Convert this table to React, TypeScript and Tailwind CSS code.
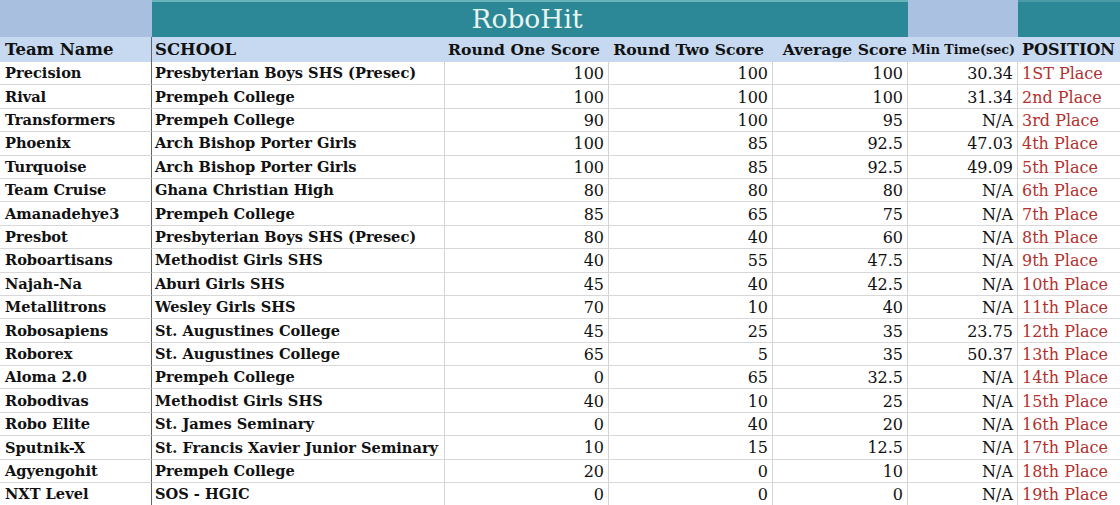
import React from "react";

type Row = [string, string, string, string, string, string, string];

const rows: Row[] = [
  ["Precision", "Presbyterian Boys SHS (Presec)", "100", "100", "100", "30.34", "1ST Place"],
  ["Rival", "Prempeh College", "100", "100", "100", "31.34", "2nd Place"],
  ["Transformers", "Prempeh College", "90", "100", "95", "N/A", "3rd Place"],
  ["Phoenix", "Arch Bishop Porter Girls", "100", "85", "92.5", "47.03", "4th Place"],
  ["Turquoise", "Arch Bishop Porter Girls", "100", "85", "92.5", "49.09", "5th Place"],
  ["Team Cruise", "Ghana Christian High", "80", "80", "80", "N/A", "6th Place"],
  ["Amanadehye3", "Prempeh College", "85", "65", "75", "N/A", "7th Place"],
  ["Presbot", "Presbyterian Boys SHS (Presec)", "80", "40", "60", "N/A", "8th Place"],
  ["Roboartisans", "Methodist Girls SHS", "40", "55", "47.5", "N/A", "9th Place"],
  ["Najah-Na", "Aburi Girls SHS", "45", "40", "42.5", "N/A", "10th Place"],
  ["Metallitrons", "Wesley Girls SHS", "70", "10", "40", "N/A", "11th Place"],
  ["Robosapiens", "St. Augustines College", "45", "25", "35", "23.75", "12th Place"],
  ["Roborex", "St. Augustines College", "65", "5", "35", "50.37", "13th Place"],
  ["Aloma 2.0", "Prempeh College", "0", "65", "32.5", "N/A", "14th Place"],
  ["Robodivas", "Methodist Girls SHS", "40", "10", "25", "N/A", "15th Place"],
  ["Robo Elite", "St. James Seminary", "0", "40", "20", "N/A", "16th Place"],
  ["Sputnik-X", "St. Francis Xavier Junior Seminary", "10", "15", "12.5", "N/A", "17th Place"],
  ["Agyengohit", "Prempeh College", "20", "0", "10", "N/A", "18th Place"],
  ["NXT Level", "SOS - HGIC", "0", "0", "0", "N/A", "19th Place"],
];

const font = { fontFamily: '"DejaVu Serif", "Liberation Serif", serif' };

const headers: [string, string][] = [
  ["Team Name", "justify-start pl-[5px] border-r border-[#666] text-[16.5px]"],
  ["SCHOOL", "justify-start pl-[3px] text-[16.5px]"],
  ["Round One Score", "justify-end pr-[9px] text-[15.6px]"],
  ["Round Two Score", "justify-end pr-[9px] text-[15.6px]"],
  ["Average Score", "justify-end pr-[1px] text-[15.6px]"],
  ["Min Time(sec)", "justify-end pr-[3px] text-[12.7px]"],
  ["POSITION", "justify-start pl-[4px] text-[16px]"],
];

export default function App() {
  return (
    <div
      className="w-[1120px] h-[505px] overflow-hidden bg-white text-[#111]"
      style={font}
    >
      <div className="grid grid-cols-[152px_293px_164px_164px_135px_110px_102px]">
        {/* Title row */}
        <div className="h-[37px] bg-[#a8bfe0]" />
        <div className="col-span-4 h-[37px] bg-[#2c8796] border-t-[2px] border-[#67b4bb] flex items-center justify-center text-[26.5px] text-[#e8f6f2] leading-none pr-[6px]">
          RoboHit
        </div>
        <div className="h-[37px] bg-[#aac1e1]" />
        <div className="h-[37px] bg-[#2c8796] border-t-[2px] border-[#4a9ba6]" />

        {/* Header row */}
        {headers.map(([t, c], i) => (
          <div
            key={i}
            className={`h-[25px] bg-[#c6d9f0] font-bold whitespace-nowrap flex items-center pt-[1px] ${c}`}
          >
            {t}
          </div>
        ))}

        {/* Data rows */}
        {rows.map((r, ri) => (
          <React.Fragment key={ri}>
            <div className="h-[23.4px] flex items-center pl-[5px] font-bold text-[14.6px] whitespace-nowrap border-r border-[#666] border-b border-b-[#d8d8d8]">
              {r[0]}
            </div>
            <div className="h-[23.4px] flex items-center pl-[3px] font-bold text-[14.6px] whitespace-nowrap border-r border-[#d4d4d4] border-b border-b-[#d8d8d8]">
              {r[1]}
            </div>
            {[r[2], r[3], r[4], r[5]].map((v, vi) => (
              <div
                key={vi}
                className="h-[23.4px] flex items-center justify-end pr-[4px] pt-[2px] text-[16px] whitespace-nowrap border-r border-[#d4d4d4] border-b border-b-[#d8d8d8]"
              >
                {v}
              </div>
            ))}
            <div className="h-[23.4px] flex items-center pl-[4px] pt-[2px] text-[16px] text-[#b2302e] whitespace-nowrap border-b border-b-[#d8d8d8]">
              {r[6]}
            </div>
          </React.Fragment>
        ))}
      </div>
    </div>
  );
}
